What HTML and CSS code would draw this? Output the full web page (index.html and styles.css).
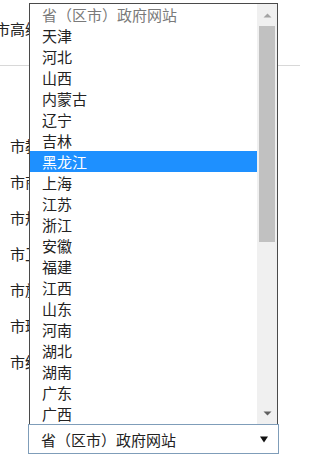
FILE: index.html
```html
<!DOCTYPE html>
<html lang="zh-CN">
<head>
<meta charset="utf-8">
<title>省（区市）政府网站</title>
<link rel="stylesheet" href="styles.css">
</head>
<body>
<div class="page">
  <div class="top"><span class="top-text">市高级人民法院</span></div>
  <ul class="labels">
    <li>市教委</li>
    <li>市商务委</li>
    <li>市规划委</li>
    <li>市卫生局</li>
    <li>市旅游委</li>
    <li>市环保局</li>
    <li>市统计局</li>
  </ul>
  <div class="select">
    <span class="select-text">省（区市）政府网站</span>
    <svg class="select-arrow" width="8" height="7" viewBox="0 0 8 7"><path d="M0 0.5 L8 0.5 L4 6.5 Z" fill="#111"/></svg>
  </div>

  <div class="popup">
    <ul class="options">
      <li class="opt opt-head">省（区市）政府网站</li>
      <li class="opt">天津</li>
      <li class="opt">河北</li>
      <li class="opt">山西</li>
      <li class="opt">内蒙古</li>
      <li class="opt">辽宁</li>
      <li class="opt">吉林</li>
      <li class="opt opt-active">黑龙江</li>
      <li class="opt">上海</li>
      <li class="opt">江苏</li>
      <li class="opt">浙江</li>
      <li class="opt">安徽</li>
      <li class="opt">福建</li>
      <li class="opt">江西</li>
      <li class="opt">山东</li>
      <li class="opt">河南</li>
      <li class="opt">湖北</li>
      <li class="opt">湖南</li>
      <li class="opt">广东</li>
      <li class="opt">广西</li>
    </ul>
    <div class="scrollbar">
      <div class="sb-btn">
        <svg width="9" height="5" viewBox="0 0 9 5"><path d="M0.5 4.5 L4.5 0.5 L8.5 4.5 Z" fill="#a3a3a3"/></svg>
      </div>
      <div class="sb-track"><div class="sb-thumb"></div></div>
      <div class="sb-btn">
        <svg width="9" height="5" viewBox="0 0 9 5"><path d="M0.5 0.5 L4.5 4.5 L8.5 0.5 Z" fill="#606060"/></svg>
      </div>
    </div>
  </div>
</div>
</body>
</html>
```

FILE: styles.css
```css
html, body {
  margin: 0;
  padding: 0;
  background: #fff;
}

body {
  font-family: "Noto Sans CJK SC", "Noto Sans", sans-serif;
  font-size: 15px;
  color: #222;
}

.page {
  position: relative;
  width: 300px;
  height: 472px;
  overflow: hidden;
}

.top {
  height: 66px;
  border-bottom: 1px solid #d8d8d8;
  box-sizing: border-box;
  padding-top: 18px;
  line-height: 21px;
  white-space: nowrap;
}

.top-text {
  display: inline-block;
  margin-left: -5px;
  width: 34px;
  overflow: hidden;
  vertical-align: top;
}

.labels {
  list-style: none;
  margin: 62px 0 0 0;
  padding: 0 0 0 10px;
  width: 19px;
  overflow: hidden;
}

.labels li {
  height: 36px;
  line-height: 36px;
  white-space: nowrap;
}

.select {
  margin: 44px 0 0 28px;
  width: 251px;
  height: 30px;
  box-sizing: border-box;
  border: 1px solid #7f9db9;
  display: flex;
  align-items: center;
  justify-content: space-between;
  padding: 0 10px 0 12px;
  color: #222;
}

.select-arrow {
  display: block;
}

.popup {
  position: absolute;
  left: 29px;
  top: 3px;
  width: 249px;
  height: 421px;
  box-sizing: border-box;
  border: 1px solid #4a4a4a;
  border-bottom: none;
  background: #fff;
  display: flex;
}

.options {
  list-style: none;
  margin: 0;
  padding: 0;
  flex: 1;
}

.opt {
  height: 21px;
  line-height: 21px;
  padding-left: 12px;
  white-space: nowrap;
  color: #222;
}

.opt-head {
  color: #7a7a7a;
}

.opt-active {
  background: #1e90ff;
  color: #fff;
}

.scrollbar {
  width: 20px;
  background: #f0f0f0;
  display: flex;
  flex-direction: column;
}

.sb-btn {
  height: 22px;
  display: flex;
  align-items: center;
  justify-content: center;
}

.sb-track {
  flex: 1;
  padding: 0 2px;
}

.sb-thumb {
  height: 216px;
  background: #c1c1c1;
}
```
